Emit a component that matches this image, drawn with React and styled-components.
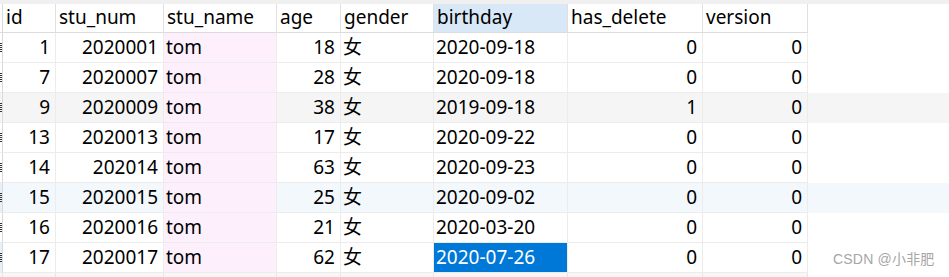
import React from "react";
import styled, { createGlobalStyle } from "styled-components";

const GlobalStyle = createGlobalStyle`
  html, body {
    margin: 0;
    padding: 0;
    background: #ffffff;
    overflow: hidden;
  }
`;

const COLS = [
  { key: "id", label: "id", width: 53, align: "right" },
  { key: "num", label: "stu_num", width: 108, align: "right" },
  { key: "name", label: "stu_name", width: 113, align: "left", tint: "#fdf0fc" },
  { key: "age", label: "age", width: 64, align: "right" },
  { key: "gender", label: "gender", width: 93, align: "left" },
  { key: "birthday", label: "birthday", width: 134, align: "left", active: true },
  { key: "del", label: "has_delete", width: 135, align: "right" },
  { key: "ver", label: "version", width: 105, align: "right" },
];

const ROWS = [
  { id: 1, num: "2020001", name: "tom", age: 18, gender: "女", birthday: "2020-09-18", del: 0, ver: 0 },
  { id: 7, num: "2020007", name: "tom", age: 28, gender: "女", birthday: "2020-09-18", del: 0, ver: 0 },
  { id: 9, num: "2020009", name: "tom", age: 38, gender: "女", birthday: "2019-09-18", del: 1, ver: 0, bg: "#f5f5f5" },
  { id: 13, num: "2020013", name: "tom", age: 17, gender: "女", birthday: "2020-09-22", del: 0, ver: 0 },
  { id: 14, num: "202014", name: "tom", age: 63, gender: "女", birthday: "2020-09-23", del: 0, ver: 0 },
  { id: 15, num: "2020015", name: "tom", age: 25, gender: "女", birthday: "2020-09-02", del: 0, ver: 0, bg: "#f3f8fd" },
  { id: 16, num: "2020016", name: "tom", age: 21, gender: "女", birthday: "2020-03-20", del: 0, ver: 0 },
  { id: 17, num: "2020017", name: "tom", age: 62, gender: "女", birthday: "2020-07-26", del: 0, ver: 0, selected: "birthday" },
];

const Page = styled.div`
  position: relative;
  width: 949px;
  height: 277px;
  overflow: hidden;
  background: #ffffff;
  font-family: "Noto Sans", "Noto Sans CJK SC", sans-serif;
  color: #000000;
`;

const TopStrip = styled.div`
  height: 4px;
  background: #f0f0f0;
`;

const Row = styled.div`
  display: flex;
  height: ${({ $h }) => $h}px;
  background: ${({ $bg }) => $bg || "transparent"};
`;

const Gutter = styled.div`
  box-sizing: border-box;
  width: 3px;
  flex: none;
  border-right: 1px solid #dadada;
  border-bottom: 1px solid ${({ $head }) => ($head ? "#dcdcdc" : "#ececec")};
  background: ${({ $bg }) => $bg || "transparent"};
  display: flex;
  align-items: center;
`;

const Tick = styled.span`
  display: block;
  width: 2px;
  height: 9px;
  background: repeating-linear-gradient(#333 0 1px, transparent 1px 2px);
`;

const Cell = styled.div`
  box-sizing: border-box;
  flex: none;
  width: ${({ $w }) => $w}px;
  display: flex;
  align-items: center;
  justify-content: ${({ $align }) => ($align === "right" ? "flex-end" : "flex-start")};
  padding: ${({ $align }) => ($align === "right" ? "0 5px 0 0" : "0 0 0 2px")};
  border-right: 1px solid ${({ $head }) => ($head ? "#e0e0e0" : "#ececec")};
  border-bottom: 1px solid ${({ $head }) => ($head ? "#dcdcdc" : "#ececec")};
  background: ${({ $bg }) => $bg || "transparent"};
  color: ${({ $sel }) => ($sel ? "#ffffff" : "#000000")};
  font-size: 19px;
  line-height: 1;
  white-space: nowrap;
`;

const HeadCell = styled(Cell)`
  justify-content: flex-start;
  padding: 0 0 1px 3px;
`;

const Filler = styled.div`
  box-sizing: border-box;
  flex: none;
  width: ${({ $w }) => $w}px;
  height: 100%;
  background: #f7f7f7;
  border-right: 1px solid #e6e6e6;
`;

const Watermark = styled.div`
  position: absolute;
  left: 833px;
  top: 248px;
  font-family: "Liberation Sans", "Noto Sans CJK SC", sans-serif;
  font-size: 14px;
  color: #a6a6a6;
  letter-spacing: 0.2px;
`;

export default function App() {
  return (
    <Page>
      <GlobalStyle />
      <TopStrip />
      <Row $h={29}>
        <Gutter $head />
        {COLS.map((c) => (
          <HeadCell key={c.key} $w={c.width} $head $bg={c.active ? "#d9e8f7" : "#ffffff"}>
            {c.label}
          </HeadCell>
        ))}
      </Row>
      {ROWS.map((r) => (
        <Row key={r.id} $h={30} $bg={r.bg}>
          <Gutter $bg={r.bg === "#f3f8fd" || r.selected ? "#e6f0fa" : undefined}>
            <Tick />
          </Gutter>
          {COLS.map((c) => {
            const sel = r.selected === c.key;
            return (
              <Cell
                key={c.key}
                $w={c.width}
                $align={c.align}
                $sel={sel}
                $bg={sel ? "#0078d7" : c.tint}
              >
                {r[c.key]}
              </Cell>
            );
          })}
        </Row>
      ))}
      <Row $h={12}>
        <Filler $w={3} />
        {COLS.map((c) => (
          <Filler key={c.key} $w={c.width} />
        ))}
      </Row>
      <Watermark>CSDN @小非肥</Watermark>
    </Page>
  );
}
